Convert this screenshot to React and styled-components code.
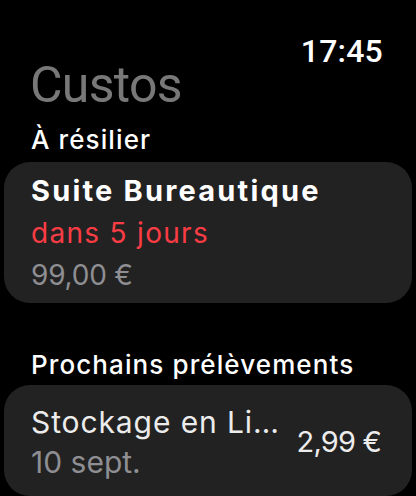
import React from 'react';
import styled, { createGlobalStyle } from 'styled-components';

const GlobalStyle = createGlobalStyle`
  html, body {
    margin: 0;
    padding: 0;
    background: #000;
  }
  body {
    font-family: 'Inter', 'Roboto', 'Liberation Sans', sans-serif;
    -webkit-font-smoothing: antialiased;
  }
`;

const Screen = styled.div`
  width: 416px;
  height: 496px;
  overflow: hidden;
  background: #000;
  color: #fff;
  display: flex;
  flex-direction: column;
`;

const StatusBar = styled.div`
  display: flex;
  justify-content: flex-end;
  padding: 41px 33px 0 0;
  font-family: 'Roboto', 'Inter', sans-serif;
  font-size: 32px;
  font-weight: 500;
  line-height: 21px;
  letter-spacing: 0.2px;
`;

const Title = styled.h1`
  margin: 0;
  padding-left: 30px;
  font-family: 'Roboto', 'Inter', sans-serif;
  font-size: 50px;
  font-weight: 400;
  line-height: 46px;
  letter-spacing: -0.7px;
  color: #787878;
`;

const SectionLabel = styled.div`
  margin-top: ${(p) => p.gap}px;
  padding-left: 31px;
  font-size: 26px;
  font-weight: 500;
  line-height: 32px;
  letter-spacing: 1.1px;
  color: #fff;
`;

const Card = styled.div`
  margin: ${(p) => p.gap}px 4px 0;
  border-radius: 26px;
  background: #222222;
  padding: ${(p) => p.pad};
  display: flex;
  align-items: center;
`;

const Column = styled.div`
  flex: 1;
  min-width: 0;
  display: flex;
  flex-direction: column;
`;

const Line = styled.div`
  font-size: ${(p) => p.size}px;
  font-weight: ${(p) => (p.bold ? 700 : 400)};
  line-height: ${(p) => p.lh}px;
  letter-spacing: ${(p) => p.track}px;
  color: ${(p) => p.color};
  white-space: nowrap;
`;

const Price = styled.div`
  flex: none;
  margin-left: 16px;
  font-size: 29px;
  line-height: 40px;
  letter-spacing: -0.8px;
  color: #ececec;
`;

export default function App() {
  return (
    <>
      <GlobalStyle />
      <Screen>
        <StatusBar>17:45</StatusBar>
        <Title>Custos</Title>

        <SectionLabel gap={16}>À résilier</SectionLabel>
        <Card gap={6} pad="8px 26px 6px 27px">
          <Column>
            <Line size={29} lh={42} bold track={2.2} color="#ffffff">
              Suite Bureautique
            </Line>
            <Line size={28} lh={42} track={1.3} color="#fa3c45">
              dans 5 jours
            </Line>
            <Line size={28} lh={43} track={-0.2} color="#8e8e93">
              99,00 €
            </Line>
          </Column>
        </Card>

        <SectionLabel gap={46}>Prochains prélèvements</SectionLabel>
        <Card gap={4} pad="17px 31px 14px 27px">
          <Column>
            <Line size={30} lh={40} track={0.9} color="#ececec">
              Stockage en Li…
            </Line>
            <Line size={30} lh={40} track={0} color="#8e8e93">
              10 sept.
            </Line>
          </Column>
          <Price>2,99 €</Price>
        </Card>
      </Screen>
    </>
  );
}
